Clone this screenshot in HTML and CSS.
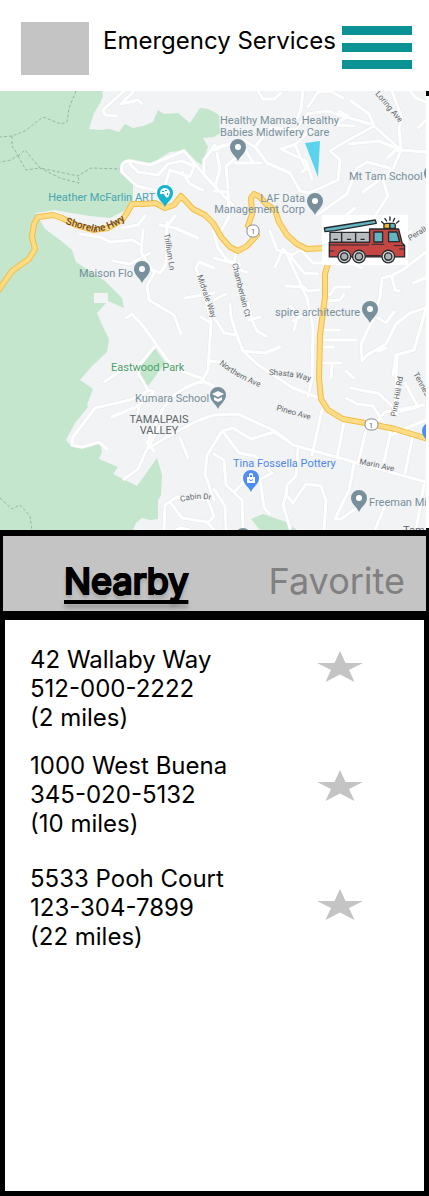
FILE: index.html
```html
<!DOCTYPE html>
<html lang="en">
<head>
<meta charset="utf-8">
<meta name="viewport" content="width=device-width, initial-scale=1">
<title>Emergency Services</title>
<link rel="stylesheet" href="styles.css">
</head>
<body>
<div class="app">
  <header class="topbar">
    <div class="logo"></div>
    <h1 class="title">Emergency Services</h1>
    <button class="menu" type="button" aria-label="Menu"><span class="bar"></span><span class="bar"></span><span class="bar"></span></button>
  </header>

  <main class="content">
    <svg class="map" viewBox="0 91 429 439" role="img" aria-label="Map of nearby emergency services">
      <defs>
        <path id="pin" d="M0 14C-2 9-8 6-8 0A8 8 0 1 1 8 0C8 6 2 9 0 14Z"/>
        <clipPath id="area"><rect x="0" y="91" width="426" height="439"/></clipPath>
        <path id="shoreline" d="M65 224Q82 229 94 232Q112 231 129 217"/>
        <path id="northern" d="M219 364Q236 378 259 387"/>
        <path id="cabin" d="M181 502Q196 497 212 500"/>
        <path id="shasta" d="M269 375Q288 375 309 381"/>
        <g id="roads">
          <path d="M124 91L103 110L105 115L117 116M134 91L121 104L138 100L142 104"/>
          <path d="M137 186L122 172Q120 161 130 161L150 165L184 151L201 171L213 184M137 186L158 191L172 186M130 164L138 172L158 175L168 164L182 161L194 166L190 177L170 170L164 188M182 172L190 184L203 190L197 188"/>
          <path d="M215 145L204 160L204 175L218 190L233 205M214 149L233 143L214 148"/>
          <path d="M145 216L138 225L122 228M160 225L175 228L198 238M166 227L175 216M143 230L141 252L152 270L160 273L166 264L167 222"/>
          <path d="M80 234L100 237L110 242L133 240L142 246M113 261L130 264L150 253M154 273L147 286L149 300L174 315L181 334"/>
          <path d="M185 298L214 293M214 268L199 262L196 268L206 300L211 323L208 370L201 383M201 317L209 322M210 361L225 363"/>
          <path d="M126 318L132 314L143 326L166 358L176 369L201 378M154 347L138 367L139 375L148 390L154 392L139 404L138 413M104 382L122 370L138 366"/>
          <path d="M72 445L73 437L95 408L130 400L148 391M72 445L82 447L99 442L107 449M112 417L138 406L154 392M161 411L174 395L185 388L202 381L214 386"/>
          <path d="M124 479L138 469L147 449L174 433L197 421L214 415L238 414L275 431L293 445L426 482M180 438L188 458M154 451L147 443L153 430L163 409M160 426L147 449"/>
          <path d="M164 530L165 505L177 497L208 500L214 516L208 523M170 502L182 518L207 522L214 530M176 530L181 528L190 530"/>
          <path d="M214 500L205 474L207 455L222 431L233 428L251 439L274 432L291 443M224 433L239 453L255 456L272 473L261 479M214 454L224 460L226 485L242 500L243 530M235 491L248 478L254 478M214 489L225 506L226 530M260 479L264 508L270 514"/>
          <path d="M298 449L296 476L287 485L286 495L293 503L306 484L321 486L326 501L324 530M286 494L283 505L290 528M322 410L312 455M344 422L337 458M366 430L358 464M391 430L384 462M413 435L405 473M426 420L391 435L373 406L357 404L346 398M351 388L365 391L378 393L393 407L397 415M354 378L346 371"/>
          <path d="M354 464L349 490L335 519L341 519L361 505M424 485L416 530M385 506L375 530M376 423L385 412L424 405M393 413L418 407L405 383M393 375L396 355L414 350L426 309M397 356L395 415"/>
          <path d="M319 290L308 291L304 287L286 286M324 292L330 295L335 287L350 287M326 301L340 300L344 294M321 330L340 330M321 340L356 340M321 347L334 347M321 363L341 363M332 364L331 378"/>
          <path d="M213 230L218 248L227 260L240 265L214 258M236 253L233 268L247 272M270 231L277 250L292 255L301 250L313 263L323 263M283 249L275 267M291 257L304 273L318 274M285 250L307 298L313 328L312 378L308 397"/>
          <path d="M214 300L226 294M230 304L231 317L236 333L243 351L265 353L280 347M214 317L224 333L236 335M242 350L257 364L293 388L319 398M249 320L260 317M248 303L252 320L257 331L266 336M290 306L298 314L294 330M293 321L310 311"/>
          <path d="M258 91L263 99L274 99L281 93M303 91L301 109L297 119M308 107L318 92L330 91L343 98M214 150L221 147L244 140L256 148L267 163L290 173L300 191L309 193L338 180L340 160L330 151L338 146L354 137L374 126L369 114L351 101M374 126L401 150L426 152M370 124L327 111L307 114L296 130L270 128L255 147"/>
          <path d="M339 111L348 116L335 125L354 126M310 130L296 144L281 149L306 161L312 179M295 145L306 169L302 172M349 144L379 141L401 150L393 169L383 180L388 196L371 222L378 233M401 150L399 128L402 118L392 91M387 158L395 151L401 150M410 91L416 98L426 102M418 128L426 120"/>
          <path d="M214 191L228 192M228 188L226 166L236 158M217 153L220 169L215 187M228 191L229 217L221 231M235 163L261 163M244 147L253 163M317 215L347 194L357 168L367 162L390 168M363 192L379 180M343 218L355 208M342 250L353 264L362 268"/>
          <path d="M426 252L404 269L391 276L382 278L380 297L374 317L361 344L362 361L367 355L386 344L396 324L410 313L426 308M392 277L395 290L399 291M378 318L386 323L394 312M426 278L413 283M378 351L386 348M411 231L391 249L386 263"/>
        </g>
        <g id="highway">
          <path d="M-2 291L12 271L29 259L35 249L32 237L34 224L38 217L53 215L62 218L76 225L94 230L108 228L122 220L127 213L132 204L143 204L155 203L165 208L174 205L181 196L193 209L205 215L213 223L222 238L230 247L238 251L247 246L257 235"/>
          <path d="M248 226L252 214L251 198L254 194L260 197L266 204L275 210L279 222L287 235L297 244L307 249L325 248"/>
          <path d="M329 260L325 274L325 297L322 320L320 335L319 378L321 399L328 410L343 419L371 424L395 429L428 439"/>
        </g>
      </defs>
      <g clip-path="url(#area)">
        <rect class="land" x="0" y="91" width="426" height="439"/>
        <path class="park" d="M0 91H102L103 96L100 103L94 113L89 129L99 130L110 129L119 132L125 124L133 128L143 126L153 122L158 110L164 114L178 113L190 123L200 108L208 109L214 112L219 115L220 133L214 137L203 138L208 147L204 158L207 169L195 160L185 150L170 152L152 163L130 160L122 163L122 172L133 182L133 200L124 211L110 218L90 216L65 212L55 210L36 213L45 229L60 240L72 250L76 262L85 268L105 281L122 298L124 308L108 301V293H94V303H106L97 313L103 327L109 339L107 352L92 366L80 380L93 389L87 405L88 407L75 423L66 440L72 447L90 444L100 443L102 452L99 459L118 467L113 474L137 486L150 468L157 458L162 475L161 495L158 500V519L150 520L142 518L136 523L133 530H0Z"/>
        <path class="park" d="M154 347L165 362L160 370L146 389L139 380V367ZM251 519L263 514L286 522L297 530H260Z"/>
        <path class="trail" d="M76 91L69 108L67 122L61 124L43 117L25 131L12 136L0 137M12 136L12 146L18 155L11 160L0 162M18 156L25 150L40 168L78 176L91 168L122 169M18 156L26 170L40 168L60 178L79 183L78 175M0 498L12 509L20 505L30 516L32 530"/>
        <use class="road-edge" href="#roads"/>
        <use class="road" href="#roads"/>
        <use class="highway-edge" href="#highway"/>
        <use class="highway" href="#highway"/>

        <g class="shield"><rect x="247" y="225" width="12" height="12" rx="5"/><rect x="365" y="419" width="13" height="11" rx="5"/></g>
        <g class="street centered"><text x="253" y="234">1</text><text x="371" y="428">1</text></g>

        <g class="street">
          <text transform="translate(375 94) rotate(50)">Loring Ave</text>
          <text transform="translate(164 234) rotate(81)">Trillium Ln</text>
          <text transform="translate(197 276) rotate(71)">Midvale Way</text>
          <text transform="translate(232 264) rotate(76)">Chamberlain Ct</text>
          <text transform="translate(410 241) rotate(-32)">Peralt</text>
          <text transform="translate(276 410) rotate(16)">Pineo Ave</text>
          <text transform="translate(396 417) rotate(-80)">Pine Hill Rd</text>
          <text transform="translate(413 374) rotate(61)">Tennes</text>
          <text transform="translate(359 464) rotate(12)">Marin Ave</text>
          <text><textPath href="#northern">Northern Ave</textPath></text>
          <text><textPath href="#shasta">Shasta Way</textPath></text>
          <text><textPath href="#cabin">Cabin Dr</textPath></text>
        </g>
        <text class="highway-name"><textPath href="#shoreline">Shoreline Hwy</textPath></text>

        <g class="label">
          <text x="220" y="124">Healthy Mamas, Healthy</text>
          <text x="220" y="136">Babies Midwifery Care</text>
          <text class="right" x="305" y="202">LAF Data</text>
          <text class="right" x="305" y="213">Management Corp</text>
          <text x="349" y="180">Mt Tam School</text>
          <text x="79" y="277">Maison Flo</text>
          <text x="275" y="316">spire architecture</text>
          <text x="135" y="402">Kumara School</text>
          <text x="369" y="506">Freeman Mi</text>
          <text class="art right" x="155" y="201">Heather McFarlin ART</text>
          <text class="green" x="111" y="371">Eastwood Park</text>
          <text class="shop" x="233" y="467">Tina Fossella Pottery</text>
          <text class="district centered" x="159" y="423">TAMALPAIS</text>
          <text class="district centered" x="159" y="434">VALLEY</text>
          <text class="district" x="403" y="534">Tam</text>
        </g>

        <g class="pin">
          <use href="#pin" x="238" y="147"/><use href="#pin" x="315" y="201"/><use href="#pin" x="142" y="269"/>
          <use href="#pin" x="370" y="309"/><use href="#pin" x="218" y="395"/><use href="#pin" x="359" y="498"/>
          <use href="#pin" x="432" y="173"/><use href="#pin" x="243" y="536"/>
          <use class="pin-shop" href="#pin" x="251" y="478"/><use class="pin-shop" href="#pin" x="430" y="431"/>
          <use class="pin-art" href="#pin" x="165" y="193"/>
        </g>
        <g class="dot">
          <circle cx="238" cy="147" r="3"/><circle cx="315" cy="201" r="3"/><circle cx="142" cy="269" r="3"/><circle cx="370" cy="309" r="3"/><circle cx="359" cy="498" r="3"/>
          <path d="M212 394L218 391L224 394L218 397ZM214 397L218 399L222 397V400L218 402L214 400Z"/>
          <path fill-rule="evenodd" d="M247 477H249V475A2 2 0 0 1 253 475V477H255V483H247ZM250 477H252V475H250ZM249 479V480Q251 482 253 480V479Q251 481 249 479Z"/>
          <path fill-rule="evenodd" d="M165 188A5 5 0 0 0 160 193Q160 195 162 194Q164 193 165 196Q167 199 169 196A5 5 0 0 0 165 188ZM162 191H164V192H162ZM165 190H167V191H165ZM167 193H168V195H167Z"/>
        </g>
      </g>
      <path class="heading" d="M305 143L320 141L318 177Z"/>
      <path class="gap" d="M426 96h3v432h-3z"/>

      <rect class="gap" x="322" y="215" width="86" height="50"/>
      <g class="truck" transform="translate(315 205) scale(.333)">
        <path class="silver" d="M45 82H164V112H45Z"/>
        <path class="red" d="M43 112H164V72H251L262 115L269 121V156H43Z"/>
        <path d="M80 82V112M122 82V112M57 103H67M97 103H107M138 103H148"/>
        <path class="trim" d="M45 120H162M171 118H207M238 122H268M254 132H268M43 138H56M154 152H196"/>
        <path class="glass" d="M177 81H203V111H177ZM221 81H246L254 110H221Z"/>
        <path class="glass" d="M28 69L181 45L184 55L60 77L30 80Z"/>
        <path class="amber" d="M207 70V59Q208 55 214 55H225V70Z"/>
        <path class="glass" d="M225 55H236Q241 55 241 61V70H225Z"/>
        <path d="M200 50L207 56M210 41L215 48M225 36V46M239 40L235 49M252 48L245 54"/>
        <g class="wheel"><circle cx="88" cy="155" r="19"/><circle cx="132" cy="155" r="19"/><circle cx="220" cy="155" r="19"/></g>
        <g class="hub"><circle cx="88" cy="155" r="11"/><circle cx="132" cy="155" r="11"/><circle cx="220" cy="155" r="11"/></g>
      </g>
    </svg>

    <nav class="tabs" aria-label="Lists">
      <button class="tab tab-active" type="button" aria-current="true">Nearby</button>
      <button class="tab" type="button">Favorite</button>
    </nav>

    <section class="places" aria-label="Nearby services">
      <ul class="place-list">
        <li>42 Wallaby Way<br>512-000-2222<br>(2 miles)</li>
        <li>1000 West Buena<br>345-020-5132<br>(10 miles)</li>
        <li class="farthest">5533 Pooh Court<br>123-304-7899<br>(22 miles)</li>
      </ul>
      <div class="stars">
        <button class="star" type="button" aria-label="Favorite 42 Wallaby Way"><svg viewBox="0 0 46 31"><path d="M23 0L28.500 12H46L32 19L37.500 31L23 23.500L8.500 31L14 19L0 12H17.500Z"/></svg></button>
        <button class="star" type="button" aria-label="Favorite 1000 West Buena"><svg viewBox="0 0 46 31"><path d="M23 0L28.500 12H46L32 19L37.500 31L23 23.500L8.500 31L14 19L0 12H17.500Z"/></svg></button>
        <button class="star" type="button" aria-label="Favorite 5533 Pooh Court"><svg viewBox="0 0 46 31"><path d="M23 0L28.500 12H46L32 19L37.500 31L23 23.500L8.500 31L14 19L0 12H17.500Z"/></svg></button>
      </div>
    </section>
  </main>
</div>
</body>
</html>
```
FILE: styles.css
```css
* { box-sizing: border-box; }

body {
  margin: 0;
  background: #000;
  color: #000;
  font-family: Inter, "Liberation Sans", sans-serif;
  font-size: 24px;
  line-height: 29px;
}

button {
  padding: 0;
  border: 0;
  background: none;
  font: inherit;
  cursor: pointer;
}

.app, .content {
  display: flex;
  flex-direction: column;
}
.app { min-height: 100vh; }
.content { flex: 1; }

.topbar {
  display: flex;
  align-items: flex-start;
  padding: 22px 17px 16px 21px;
  background: #fff;
}
.logo {
  width: 68px;
  height: 53px;
  background: #c4c4c4;
}
.title {
  flex: 1;
  margin: 4px 0 0 14px;
  font-size: 24px;
  font-weight: 400;
  white-space: nowrap;
}
.menu {
  display: flex;
  flex-direction: column;
  gap: 8px;
  width: 70px;
  margin-top: 4px;
}
.bar {
  width: 100%;
  height: 9px;
  background: #0b9295;
}

/* Map */
.map {
  display: block;
  width: 100%;
  height: auto;
  font-family: Roboto, sans-serif;
}
.land { fill: #f1f3f4; }
.park { fill: #c3e6cd; }
.trail { fill: none; stroke: #93b9a0; stroke-width: 1; stroke-dasharray: 3 2; }
.road, .road-edge, .highway, .highway-edge {
  fill: none;
  stroke-linecap: round;
  stroke-linejoin: round;
}
.road-edge { stroke: #e6e9eb; stroke-width: 4; }
.road { stroke: #fff; stroke-width: 3; }
.highway-edge { stroke: #f3bd45; stroke-width: 6; }
.highway { stroke: #fddc85; stroke-width: 4; }
.shield { fill: #fff; stroke: #8a8d90; }
.street { font-size: 8px; fill: #63676b; }
.highway-name { font-size: 10px; font-weight: 500; fill: #6b4526; }
.label { font-size: 11px; fill: #78909c; }
.right { text-anchor: end; }
.centered { text-anchor: middle; }
.art { fill: #4aa5b1; }
.green { fill: #4b9f6a; }
.shop { fill: #5088e8; }
.district { fill: #5f6368; }
.pin { fill: #78909c; }
.pin-shop { fill: #4f8df5; }
.pin-art { fill: #12b5cb; }
.dot, .gap { fill: #fff; }
.heading { fill: #5ad3ee; }
.truck { fill: none; stroke: #252a2d; stroke-width: 4; stroke-linejoin: round; stroke-linecap: round; }
.trim { stroke-width: 3; }
.silver { fill: #b9bcbe; }
.red { fill: #c54642; }
.glass { fill: #64b5c2; }
.amber { fill: #efb638; }
.wheel { fill: #d6d8d8; }
.hub { fill: #aeb2b4; }

/* Tabs */
.tabs {
  display: flex;
  justify-content: space-between;
  margin: 6px 3px 9px;
  padding: 23px 21px 8px 61px;
  background: #c4c4c4;
}
.tab {
  color: #808080;
  font-size: 36px;
  line-height: 44px;
}
.tab-active {
  color: #000;
  -webkit-text-stroke: 2px #000;
  text-decoration: underline 4px;
  text-decoration-skip-ink: none;
  text-underline-offset: 6px;
  text-shadow: 0 4px 4px rgba(0, 0, 0, .25);
}

/* Places */
.places {
  display: flex;
  flex: 1;
  justify-content: space-between;
  margin: 0 5px 5px;
  padding: 25px 61px 25px 25px;
  background: #fff;
}
.place-list {
  display: flex;
  flex-direction: column;
  gap: 19px;
  margin: 0;
  padding: 0;
  list-style: none;
}
.farthest { margin-top: 7px; }
.stars {
  display: flex;
  flex-direction: column;
  gap: 88px;
  padding-top: 6px;
}
.star {
  width: 46px;
  height: 31px;
}
.star svg {
  display: block;
  width: 100%;
  fill: #c4c4c4;
}
```
